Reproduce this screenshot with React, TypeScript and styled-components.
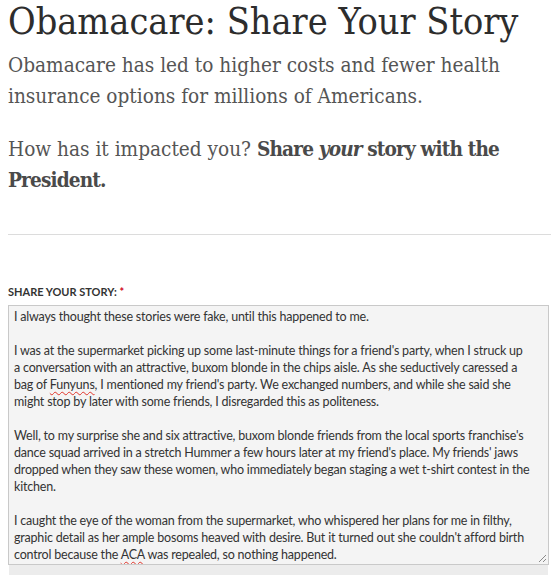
import React from 'react';
import styled, { createGlobalStyle } from 'styled-components';

const GlobalStyle = createGlobalStyle`
  html, body {
    margin: 0;
    padding: 0;
    background-color: #fff;
  }
  body {
    padding: 0 8px;
  }
`;

const serif = `'DejaVu Serif', 'Liberation Serif', serif`;

const Page = styled.div`
  width: 543px;
`;

const Title = styled.h1`
  margin: 0;
  font-family: ${serif};
  font-stretch: condensed;
  font-size: 37.5px;
  line-height: 42px;
  font-weight: 400;
  color: #2d2d2d;
`;

const Lead = styled.p<{ $gap: number }>`
  margin: ${(p) => p.$gap}px 0 0;
  font-family: ${serif};
  font-stretch: condensed;
  font-size: 20.6px;
  line-height: 31px;
  color: #555;

  strong {
    color: #4a4a4a;
    letter-spacing: -0.85px;
  }
`;

const Divider = styled.hr`
  margin: 38px 0 0;
  border: none;
  border-top: 1px solid #dcdcdc;
  height: 0;
`;

const Label = styled.div`
  margin-top: 50px;
  font-family: Lato, 'Liberation Sans', sans-serif;
  font-size: 11px;
  line-height: 14px;
  font-weight: 700;
  color: #333;
  text-transform: uppercase;

  span {
    color: #d0021b;
  }
`;

const StoryBox = styled.div`
  position: relative;
  margin-top: 6px;
  width: 541px;
  height: 260px;
  box-sizing: border-box;
  padding: 2px 5px 1px;
  border: 1px solid #c9c9c9;
  background-color: #f4f4f4;
  font-family: Lato, 'Liberation Sans', sans-serif;
  font-size: 12.5px;
  letter-spacing: -0.2px;
  line-height: 17px;
  color: #333;
  white-space: pre;
  overflow: hidden;
`;

const StoryLine = styled.div`
  height: 17px;
`;

const Misspelled = styled.span`
  text-decoration: underline wavy #e0342a;
  text-decoration-thickness: 1px;
  text-underline-offset: 2px;
`;

const Grip = styled.svg`
  position: absolute;
  right: 1px;
  bottom: 1px;
`;

const Footer = styled.div`
  width: 539px;
  margin-left: 1px;
  height: 10px;
  background-color: #ececec;
`;

const ResizeGrip = () => (
  <Grip width="10" height="10" viewBox="0 0 10 10">
    <path d="M9 2 L2 9 M9 6 L6 9" stroke="#8a8a8a" strokeWidth="1" />
  </Grip>
);

const App: React.FC = () => {
  return (
    <>
      <GlobalStyle />
      <Page>
        <Title>Obamacare: Share Your Story</Title>
        <Lead $gap={8}>
          Obamacare has led to higher costs and fewer health insurance options for millions of
          Americans.
        </Lead>
        <Lead $gap={22}>
          How has it impacted you?{' '}
          <strong>
            Share <em>your</em> story with the President.
          </strong>
        </Lead>
        <Divider />
        <Label>
          Share your story: <span>*</span>
        </Label>
        <StoryBox>
          <StoryLine>I always thought these stories were fake, until this happened to me.</StoryLine>
          <StoryLine />
          <StoryLine>
            I was at the supermarket picking up some last-minute things for a friend's party, when I struck up
          </StoryLine>
          <StoryLine>
            a conversation with an attractive, buxom blonde in the chips aisle. As she seductively caressed a
          </StoryLine>
          <StoryLine>
            bag of <Misspelled>Funyuns</Misspelled>, I mentioned my friend's party. We exchanged numbers, and while she said she
          </StoryLine>
          <StoryLine>might stop by later with some friends, I disregarded this as politeness.</StoryLine>
          <StoryLine />
          <StoryLine>
            Well, to my surprise she and six attractive, buxom blonde friends from the local sports franchise's
          </StoryLine>
          <StoryLine>
            dance squad arrived in a stretch Hummer a few hours later at my friend's place. My friends' jaws
          </StoryLine>
          <StoryLine>
            dropped when they saw these women, who immediately began staging a wet t-shirt contest in the
          </StoryLine>
          <StoryLine>kitchen.</StoryLine>
          <StoryLine />
          <StoryLine>
            I caught the eye of the woman from the supermarket, who whispered her plans for me in filthy,
          </StoryLine>
          <StoryLine>
            graphic detail as her ample bosoms heaved with desire. But it turned out she couldn't afford birth
          </StoryLine>
          <StoryLine>
            control because the <Misspelled>ACA</Misspelled> was repealed, so nothing happened.
          </StoryLine>
          <ResizeGrip />
        </StoryBox>
        <Footer />
      </Page>
    </>
  );
};

export default App;
